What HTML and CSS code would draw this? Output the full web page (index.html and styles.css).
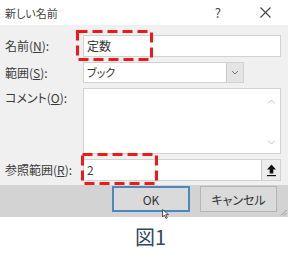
FILE: index.html
```html
<!DOCTYPE html>
<html lang="ja">
<head>
    <meta charset="UTF-8">
    <title>新しい名前</title>
    <link rel="stylesheet" href="styles.css">
</head>
<body>
<div class="dialog">
    <div class="titlebar">
        <span class="title">新しい名前</span>
        <span class="help">?</span>
        <svg class="close" width="11" height="11" viewBox="0 0 11 11">
            <path d="M0.5 0.5 L10.5 10.5 M10.5 0.5 L0.5 10.5" stroke="#444" stroke-width="1.1" fill="none"/>
        </svg>
    </div>

    <div class="form">
        <label class="lbl">名前(<u>N</u>):</label>
        <div class="field">定数</div>

        <label class="lbl">範囲(<u>S</u>):</label>
        <div class="combo">
            <span class="combo-text">ブック</span>
            <span class="combo-btn">
                <svg width="8" height="5" viewBox="0 0 8 5"><path d="M1 1 L4 4 L7 1" stroke="#777" stroke-width="1" fill="none"/></svg>
            </span>
        </div>

        <label class="lbl lbl-top">コメント(<u>O</u>):</label>
        <div class="memo">
            <div class="memo-text"></div>
            <div class="memo-scroll">
                <svg width="9" height="5" viewBox="0 0 9 5"><path d="M1 4.5 L4.5 1 L8 4.5" stroke="#c4c4c4" stroke-width="1" fill="none"/></svg>
                <svg width="9" height="5" viewBox="0 0 9 5"><path d="M1 0.5 L4.5 4 L8 0.5" stroke="#c4c4c4" stroke-width="1" fill="none"/></svg>
            </div>
        </div>

        <label class="lbl">参照範囲(<u>R</u>):</label>
        <div class="refedit">
            <span class="ref-text">2</span>
            <span class="ref-btn">
                <svg width="11" height="13" viewBox="0 0 11 13">
                    <path d="M5.5 0.5 L10 5.5 L7.3 5.5 L7.3 9.5 L3.7 9.5 L3.7 5.5 L1 5.5 Z" fill="#111"/>
                    <rect x="1" y="11" width="9" height="1.2" fill="#111"/>
                </svg>
            </span>
        </div>
    </div>

    <div class="actions">
        <button class="btn btn-default">OK</button>
        <button class="btn">キャンセル</button>
        <svg class="grip" width="7" height="7" viewBox="0 0 7 7">
            <path d="M6.5 1 L1 6.5 M6.5 4 L4 6.5" stroke="#9a9a9a" stroke-width="1" fill="none"/>
        </svg>
    </div>

    <!-- red marks drawn over the dialog -->
    <svg class="mark mark-name" width="77" height="31" viewBox="0 0 77 31">
        <rect x="1.5" y="1.5" width="74" height="28" fill="none" stroke="#f21818" stroke-width="3" stroke-dasharray="10 5"/>
    </svg>
    <svg class="mark mark-ref" width="77" height="32" viewBox="0 0 77 32">
        <rect x="1.5" y="1.5" width="74" height="29" fill="none" stroke="#f21818" stroke-width="3" stroke-dasharray="10 5"/>
    </svg>

    <svg class="cursor" width="8" height="10" viewBox="0 0 8 10">
        <path d="M0.5 0.5 L0.5 8 L2.5 6 L4 9.5 L5.3 9 L3.8 5.6 L6.5 5.6 Z" fill="#fff" stroke="#333" stroke-width="0.8"/>
    </svg>
</div>

<div class="caption">図1</div>
</body>
</html>
```

FILE: styles.css
```css
body {
    margin: 0;
    width: 288px;
    background: #fff;
    font-family: "Noto Sans CJK JP", "Noto Sans", sans-serif;
    font-feature-settings: "palt";
    color: #333;
}

.dialog {
    position: relative;
    width: 288px;
}

.titlebar {
    height: 25px;
    background: #fff;
    display: flex;
    align-items: center;
    padding-left: 5px;
    font-size: 11px;
}

.title {
    flex: 1;
    color: #444;
}

.help {
    font-size: 13px;
    color: #444;
    margin-right: 39px;
}

.close {
    margin-right: 17px;
}

.form {
    background: #f0f0f0;
    display: grid;
    grid-template-columns: 83px 198px;
    grid-template-rows: 22px 21px 66px 22px;
    row-gap: 5px;
    padding: 10px 7px 4px 0;
}

.lbl {
    font-size: 12px;
    line-height: 16px;
    padding-left: 5px;
    align-self: center;
    color: #3a3a3a;
    white-space: nowrap;
}

.lbl-top {
    align-self: start;
    padding-top: 2px;
}

.field {
    background: #fff;
    border: 1px solid #d2d2d2;
    font-size: 12px;
    line-height: 20px;
    padding-left: 3px;
    color: #333;
}

.combo {
    width: 161px;
    display: flex;
    background: #fff;
    border: 1px solid #d2d2d2;
    box-sizing: border-box;
}

.combo-text {
    flex: 1;
    font-size: 11px;
    line-height: 19px;
    padding-left: 3px;
}

.combo-btn {
    width: 16px;
    background: #e4e4e4;
    border-left: 1px solid #c8c8c8;
    display: flex;
    align-items: center;
    justify-content: center;
}

.memo {
    display: flex;
    background: #fff;
    border: 1px solid #d2d2d2;
}

.memo-text {
    flex: 1;
}

.memo-scroll {
    width: 18px;
    display: flex;
    flex-direction: column;
    justify-content: space-between;
    align-items: center;
    padding: 10px 0 8px;
}

.refedit {
    display: flex;
    background: #fff;
    border: 1px solid #d2d2d2;
}

.ref-text {
    flex: 1;
    font-size: 12px;
    line-height: 20px;
    padding-left: 3px;
    color: #444;
}

.ref-btn {
    width: 18px;
    background: #ececec;
    border-left: 1px solid #c8c8c8;
    display: flex;
    align-items: center;
    justify-content: center;
}

.actions {
    position: relative;
    height: 32px;
    box-sizing: border-box;
    background: #d3d3d3;
    display: flex;
    justify-content: flex-end;
    align-items: flex-start;
    gap: 10px;
    padding: 1px 11px 0 0;
}

.btn {
    width: 77px;
    height: 26px;
    background: #dadada;
    border: 1px solid #b4b4b4;
    font-family: inherit;
    font-feature-settings: "palt";
    font-size: 12px;
    color: #333;
    padding: 0;
}

.btn-default {
    width: 78px;
    border: 2px solid #4a88bd;
}

.grip {
    position: absolute;
    right: 1px;
    bottom: 1px;
}

.mark {
    position: absolute;
}

.mark-name {
    left: 76px;
    top: 30px;
}

.mark-ref {
    left: 81px;
    top: 153px;
}

.cursor {
    position: absolute;
    left: 162px;
    top: 209px;
}

.caption {
    padding: 7px 0 0 135px;
    font-size: 20px;
    line-height: 26px;
    color: #34495e;
}
```
